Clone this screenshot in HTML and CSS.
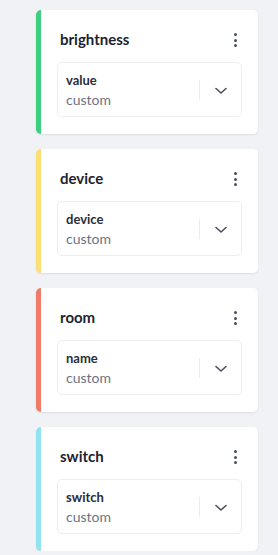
FILE: index.html
```html
<!DOCTYPE html>
<html>
<head>
<meta charset="utf-8">
<link rel="stylesheet" href="styles.css">
</head>
<body>
<div class="list">
  <div class="card green">
    <div class="head"><span class="title">brightness</span><span class="kebab"><i></i><i></i><i></i></span></div>
    <div class="field">
      <div class="labels"><div class="name">value</div><div class="type">custom</div></div>
      <div class="sep"></div>
      <div class="chev"><svg width="12" height="8" viewBox="0 0 12 8"><path d="M1 1.5 L6 6 L11 1.5" fill="none" stroke="#4a4f5e" stroke-width="1.6" stroke-linecap="round" stroke-linejoin="round"/></svg></div>
    </div>
  </div>
  <div class="card yellow">
    <div class="head"><span class="title">device</span><span class="kebab"><i></i><i></i><i></i></span></div>
    <div class="field">
      <div class="labels"><div class="name">device</div><div class="type">custom</div></div>
      <div class="sep"></div>
      <div class="chev"><svg width="12" height="8" viewBox="0 0 12 8"><path d="M1 1.5 L6 6 L11 1.5" fill="none" stroke="#4a4f5e" stroke-width="1.6" stroke-linecap="round" stroke-linejoin="round"/></svg></div>
    </div>
  </div>
  <div class="card red">
    <div class="head"><span class="title">room</span><span class="kebab"><i></i><i></i><i></i></span></div>
    <div class="field">
      <div class="labels"><div class="name">name</div><div class="type">custom</div></div>
      <div class="sep"></div>
      <div class="chev"><svg width="12" height="8" viewBox="0 0 12 8"><path d="M1 1.5 L6 6 L11 1.5" fill="none" stroke="#4a4f5e" stroke-width="1.6" stroke-linecap="round" stroke-linejoin="round"/></svg></div>
    </div>
  </div>
  <div class="card cyan">
    <div class="head"><span class="title">switch</span><span class="kebab"><i></i><i></i><i></i></span></div>
    <div class="field">
      <div class="labels"><div class="name">switch</div><div class="type">custom</div></div>
      <div class="sep"></div>
      <div class="chev"><svg width="12" height="8" viewBox="0 0 12 8"><path d="M1 1.5 L6 6 L11 1.5" fill="none" stroke="#4a4f5e" stroke-width="1.6" stroke-linecap="round" stroke-linejoin="round"/></svg></div>
    </div>
  </div>
</div>
</body>
</html>
```
FILE: styles.css
```css
html, body {
  margin: 0;
  padding: 0;
  background: #f1f2f6;
  font-family: Lato, "Noto Sans", sans-serif;
}
.list {
  display: flex;
  flex-direction: column;
  gap: 15px;
  padding: 10px 0 0 36px;
  width: 222px;
}
.card {
  background: #fff;
  border-radius: 5px;
  border-left: 5px solid #34c77b;
  box-shadow: 0 1px 2px rgba(30, 40, 70, 0.10);
  height: 124px;
  box-sizing: border-box;
  padding: 19px 16px 0 16px;
}
.card.green { border-left-color: #3ccf80; }
.card.yellow { border-left-color: #fbdf72; }
.card.red { border-left-color: #f07b68; }
.card.cyan { border-left-color: #93e2f1; }
.head {
  display: flex;
  align-items: center;
  justify-content: space-between;
  height: 20px;
  margin-bottom: 13px;
}
.title {
  font-size: 15px;
  font-weight: 700;
  color: #1e2230;
  line-height: 20px;
  padding-left: 3px;
}
.kebab {
  display: flex;
  flex-direction: column;
  gap: 2.5px;
  margin-right: 5px;
  margin-top: 2px;
}
.kebab i {
  display: block;
  width: 3px;
  height: 3px;
  border-radius: 50%;
  background: #4a4f5e;
}
.field {
  display: flex;
  align-items: center;
  height: 55px;
  box-sizing: border-box;
  border: 1px solid #eceef2;
  border-radius: 5px;
  padding: 0 0 0 8px;
}
.labels {
  flex: 1;
  line-height: 20px;
}
.name {
  font-size: 13px;
  font-weight: 700;
  color: #2a2e3a;
}
.type {
  font-size: 14px;
  color: #6e7282;
}
.sep {
  width: 1px;
  height: 20px;
  background: #ebecf0;
}
.chev {
  width: 41px;
  display: flex;
  justify-content: center;
  align-items: center;
  padding-top: 2px;
}
.chev svg { display: block; }
```
